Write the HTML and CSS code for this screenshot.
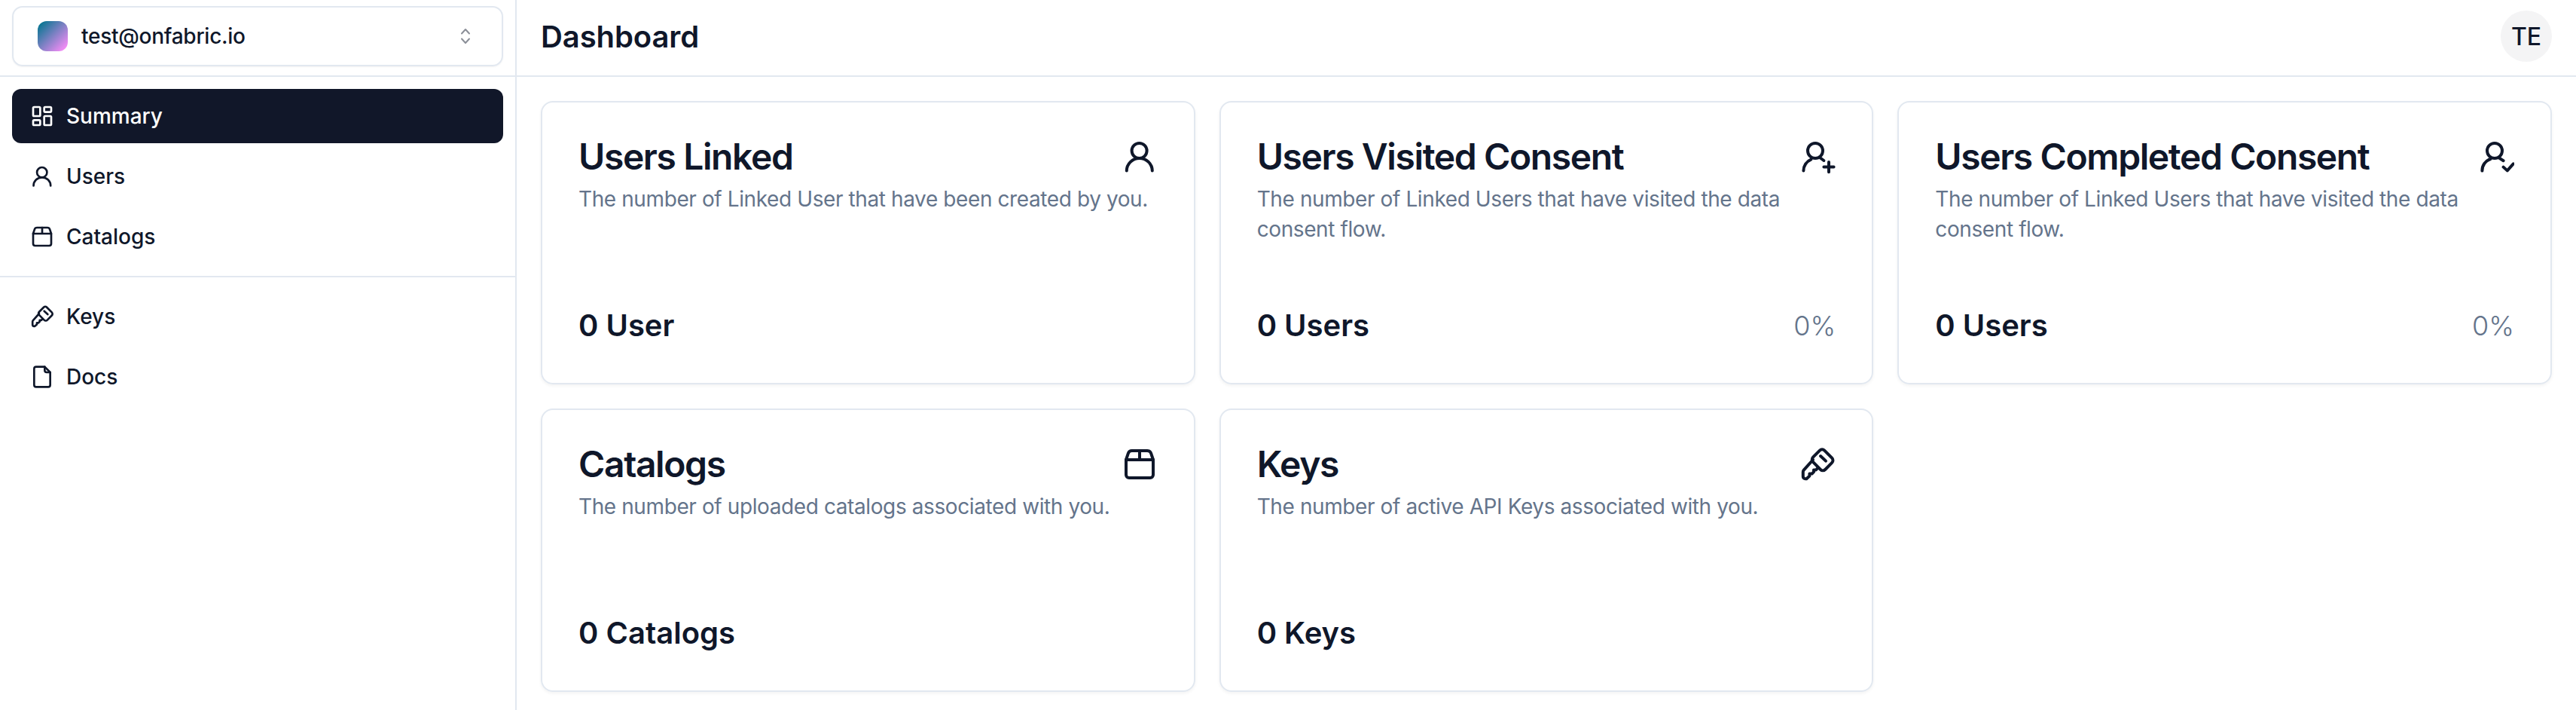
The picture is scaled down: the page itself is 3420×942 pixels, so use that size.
FILE: index.html
```html
<!DOCTYPE html>
<html lang="en">
<head>
    <meta charset="UTF-8">
    <title>Dashboard</title>
    <link rel="stylesheet" href="styles.css">
</head>
<body>
    <svg class="sprites" aria-hidden="true">
        <symbol id="i-dash" viewBox="0 0 24 24"><rect x="3" y="3" width="7" height="9" rx="1"/><rect x="14" y="3" width="7" height="5" rx="1"/><rect x="14" y="12" width="7" height="9" rx="1"/><rect x="3" y="16" width="7" height="5" rx="1"/></symbol>
        <symbol id="i-user" viewBox="0 0 24 24"><circle cx="11.8" cy="8" r="5"/><path d="M3.4 21.3a8.5 8.3 0 0 1 17 0"/></symbol>
        <symbol id="i-box" viewBox="0 0 24 24"><path d="M3 9l1.400-4.200A2.600 2.600 0 0 1 6.900 3h10.200a2.600 2.600 0 0 1 2.500 1.800L21 9v10a2 2 0 0 1-2 2H5a2 2 0 0 1-2-2z"/><path d="M3 9h18M12 3v6"/></symbol>
        <symbol id="i-key" viewBox="0 0 24 24"><path d="M13.500 2.800a2.200 2.200 0 0 1 3.100 0l5 5a2.200 2.200 0 0 1 0 3.100l-4.500 4.600a2.200 2.200 0 0 1-3.100 0L9 10.400a2.200 2.200 0 0 1 0-3.100z"/><path d="M14 6.500l3.500 3.300"/><path d="M9 9l-6.100 6.800a2 2 0 0 0-.5 1.300v3a1.500 1.500 0 0 0 1.500 1.500h.8l2-1.800v-1.500h1.600l1.200-1.200v-1.400h1.500l1.400-1.400"/></symbol>
        <symbol id="i-doc" viewBox="0 0 24 24"><path d="M4 4a2 2 0 0 1 2-2h8.500L20 7.500V20a2 2 0 0 1-2 2H6a2 2 0 0 1-2-2z"/><path d="M14.500 2v3.500a2 2 0 0 0 2 2H20"/></symbol>
        <symbol id="i-user-plus" viewBox="0 0 24 24"><circle cx="10.500" cy="8" r="5"/><path d="M2.700 21.300a8 8 0 0 1 5-7.500M13.500 12.500l2.700 2"/><path d="M19.500 15.500v6.600M16.200 18.800h6.600"/></symbol>
        <symbol id="i-user-check" viewBox="0 0 24 24"><circle cx="11" cy="8" r="5"/><path d="M2.700 21.300a8 8 0 0 1 5.500-7.800M14 12.800l2.800 1.800"/><path d="M16.800 18.800l2.600 2.400 4-4.500"/></symbol>
    </svg>

    <div class="app">
        <aside class="sidebar">
            <div class="switcher-wrap">
                <div class="switcher">
                    <span class="logo"></span>
                    <span class="switcher-name">test@onfabric.io</span>
                    <svg class="chevrons" viewBox="0 0 24 24"><path d="M7 8.500L12 3l5 5.500M7 15.500l5 5.500 5-5.500"/></svg>
                </div>
            </div>
            <nav class="nav">
                <a class="nav-item active"><svg class="icon"><use href="#i-dash"/></svg>Summary</a>
                <a class="nav-item"><svg class="icon"><use href="#i-user"/></svg>Users</a>
                <a class="nav-item"><svg class="icon"><use href="#i-box"/></svg>Catalogs</a>
            </nav>
            <nav class="nav nav-bottom">
                <a class="nav-item"><svg class="icon"><use href="#i-key"/></svg>Keys</a>
                <a class="nav-item"><svg class="icon"><use href="#i-doc"/></svg>Docs</a>
            </nav>
        </aside>

        <main class="main">
            <header class="topbar">
                <h1>Dashboard</h1>
                <div class="avatar">TE</div>
            </header>
            <section class="cards">
                <div class="card">
                    <div class="card-head">
                        <h2>Users Linked</h2>
                        <svg class="card-icon"><use href="#i-user"/></svg>
                    </div>
                    <p>The number of Linked User that have been created by you.</p>
                    <div class="card-foot"><b>0 User</b></div>
                </div>
                <div class="card">
                    <div class="card-head">
                        <h2>Users Visited Consent</h2>
                        <svg class="card-icon"><use href="#i-user-plus"/></svg>
                    </div>
                    <p>The number of Linked Users that have visited the data consent flow.</p>
                    <div class="card-foot"><b>0 Users</b><span>0%</span></div>
                </div>
                <div class="card">
                    <div class="card-head">
                        <h2>Users Completed Consent</h2>
                        <svg class="card-icon"><use href="#i-user-check"/></svg>
                    </div>
                    <p>The number of Linked Users that have visited the data consent flow.</p>
                    <div class="card-foot"><b>0 Users</b><span>0%</span></div>
                </div>
                <div class="card">
                    <div class="card-head">
                        <h2>Catalogs</h2>
                        <svg class="card-icon"><use href="#i-box"/></svg>
                    </div>
                    <p>The number of uploaded catalogs associated with you.</p>
                    <div class="card-foot"><b>0 Catalogs</b></div>
                </div>
                <div class="card">
                    <div class="card-head">
                        <h2>Keys</h2>
                        <svg class="card-icon"><use href="#i-key"/></svg>
                    </div>
                    <p>The number of active API Keys associated with you.</p>
                    <div class="card-foot"><b>0 Keys</b></div>
                </div>
            </section>
        </main>
    </div>
</body>
</html>
```
FILE: styles.css
```css
* {
    box-sizing: border-box;
}
body {
    margin: 0;
    font-family: Inter, "Liberation Sans", sans-serif;
    color: #0f172a;
    background-color: #fff;
}
.sprites {
    display: none;
}
.app {
    display: flex;
    height: 100vh;
    overflow: hidden;
}

/* sidebar */
.sidebar {
    width: 686px;
    flex-shrink: 0;
    border-right: 2px solid #e2e8f0;
}
.switcher-wrap {
    height: 102px;
    padding: 8px 16px 0;
    border-bottom: 2px solid #e2e8f0;
}
.switcher {
    display: flex;
    align-items: center;
    gap: 18px;
    height: 80px;
    padding: 0 36px 0 32px;
    border: 2px solid #e2e8f0;
    border-radius: 14px;
    box-shadow: 0 1px 2px rgba(0, 0, 0, 0.05);
}
.logo {
    width: 40px;
    height: 40px;
    border-radius: 12px;
    background: linear-gradient(135deg, #00758f 5%, #ff8dfb 95%);
}
.switcher-name {
    flex: 1;
    font-size: 28px;
    font-weight: 500;
    letter-spacing: -0.25px;
}
.chevrons {
    width: 24px;
    height: 24px;
    fill: none;
    stroke: #8b8f98;
    stroke-width: 2;
    stroke-linecap: round;
    stroke-linejoin: round;
}
.nav {
    display: flex;
    flex-direction: column;
    gap: 8px;
    padding: 16px;
}
.nav-bottom {
    border-top: 2px solid #e2e8f0;
}
.nav-item {
    display: flex;
    align-items: center;
    gap: 16px;
    height: 72px;
    padding: 0 24px;
    border-radius: 12px;
    font-size: 28px;
    font-weight: 500;
}
.nav-item.active {
    background-color: #111729;
    color: #fff;
}
.icon {
    width: 32px;
    height: 32px;
    fill: none;
    stroke: currentColor;
    stroke-width: 2;
    stroke-linecap: round;
    stroke-linejoin: round;
}

/* main */
.main {
    flex: 1;
    min-width: 0;
}
.topbar {
    display: flex;
    align-items: center;
    justify-content: space-between;
    height: 102px;
    padding: 0 32px 4px;
    border-bottom: 2px solid #e2e8f0;
}
.topbar h1 {
    margin: 0;
    font-size: 40px;
    font-weight: 600;
    letter-spacing: -0.1px;
}
.avatar {
    display: flex;
    align-items: center;
    justify-content: center;
    width: 68px;
    height: 68px;
    border-radius: 50%;
    background-color: #f4f4f5;
    font-size: 32px;
    font-weight: 500;
}
.cards {
    display: grid;
    grid-template-columns: repeat(3, 1fr);
    grid-auto-rows: 376px;
    gap: 32px;
    padding: 32px;
}
.card {
    display: flex;
    flex-direction: column;
    padding: 48px 48px 52px;
    border: 2px solid #e2e8f0;
    border-radius: 16px;
    box-shadow: 0 2px 4px rgba(0, 0, 0, 0.05);
}
.card-head {
    display: flex;
    justify-content: space-between;
    margin-bottom: 12px;
}
.card h2 {
    margin: 0;
    font-size: 48px;
    line-height: 48px;
    font-weight: 600;
    letter-spacing: -1.4px;
}
.card p {
    flex: 1;
    margin: 0;
    font-size: 28px;
    line-height: 40px;
    letter-spacing: -0.4px;
    color: #64748b;
}
.card-icon {
    width: 48px;
    height: 48px;
    flex-shrink: 0;
    fill: none;
    stroke: currentColor;
    stroke-width: 2;
    stroke-linecap: round;
    stroke-linejoin: round;
}
.card-foot {
    display: flex;
    justify-content: space-between;
    align-items: center;
    font-size: 40px;
}
.card-foot b {
    font-weight: 600;
}
.card-foot span {
    font-size: 36px;
    font-weight: 300;
    color: #64748b;
}
```
